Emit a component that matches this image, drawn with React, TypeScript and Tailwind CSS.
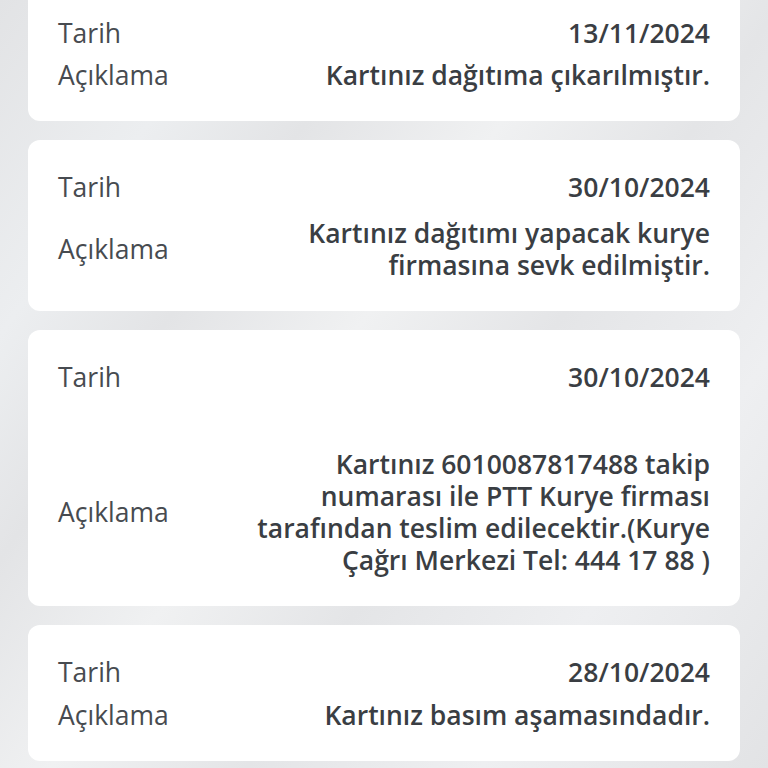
import React from "react";

type Entry = {
  date: string;
  lines: string[];
  gap: string;
};

const entries: Entry[] = [
  { date: "13/11/2024", lines: ["Kartınız dağıtıma çıkarılmıştır."], gap: "mt-[10px]" },
  {
    date: "30/10/2024",
    lines: ["Kartınız dağıtımı yapacak kurye", "firmasına sevk edilmiştir."],
    gap: "mt-[14px]",
  },
  {
    date: "30/10/2024",
    lines: [
      "Kartınız 6010087817488 takip",
      "numarası ile PTT Kurye firması",
      "tarafından teslim edilecektir.(Kurye",
      "Çağrı Merkezi Tel: 444 17 88 )",
    ],
    gap: "mt-[55px]",
  },
  { date: "28/10/2024", lines: ["Kartınız basım aşamasındadır."], gap: "mt-[11px]" },
];

export default function App() {
  return (
    <div className="w-[768px] h-[768px] overflow-hidden bg-[#e6e7e9] bg-[linear-gradient(125deg,#e2e3e5_0%,#eceef0_18%,#e3e4e6_30%,#f0f1f2_45%,#e4e5e7_60%,#eeeff1_78%,#e2e3e5_100%)] font-['Open_Sans','Liberation_Sans',sans-serif] text-[26.5px] leading-[32px] text-[#3a3e43]">
      <div className="flex flex-col gap-[19px] px-[28px] -mt-[14px]">
        {entries.map((e, i) => (
          <div key={i} className="bg-white rounded-[12px] px-[30px] pt-[31px] pb-[30px]">
            <div className="flex items-center justify-between">
              <span className="text-[#474b50]">Tarih</span>
              <span className="font-semibold">{e.date}</span>
            </div>
            <div className={`flex items-center justify-between ${e.gap}`}>
              <span className="text-[#474b50]">Açıklama</span>
              <div className="text-right font-semibold">
                {e.lines.map((l, j) => (
                  <div key={j}>{l}</div>
                ))}
              </div>
            </div>
          </div>
        ))}
      </div>
    </div>
  );
}
